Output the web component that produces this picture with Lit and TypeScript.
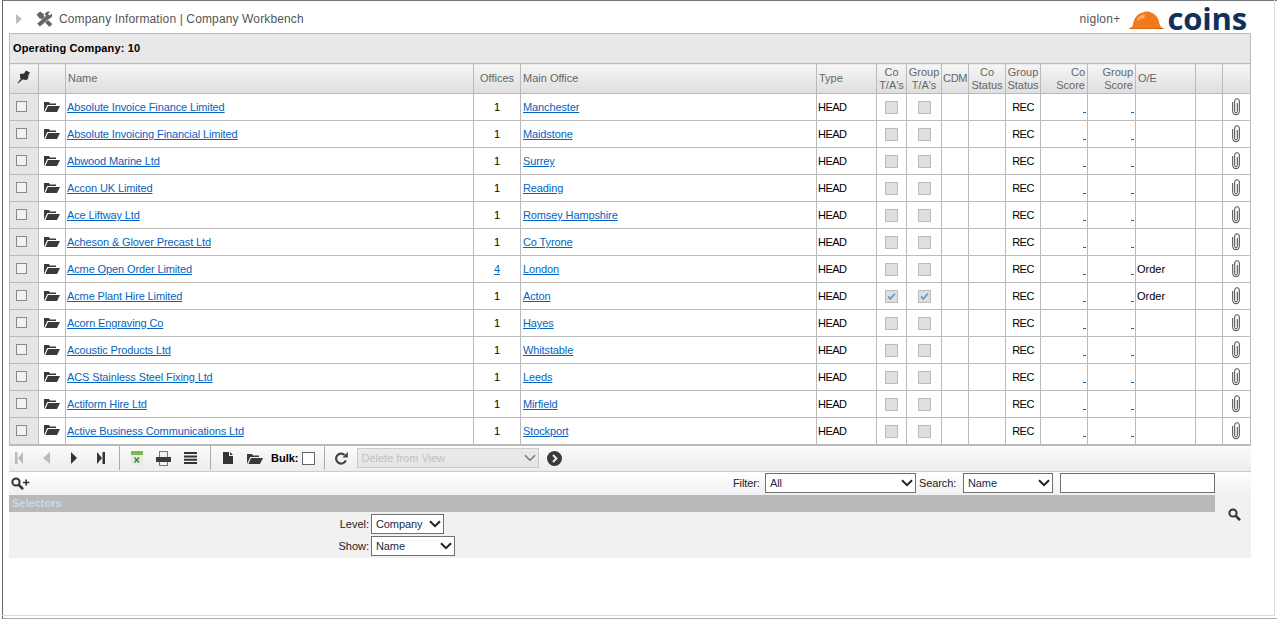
import { LitElement, html, css, svg } from "lit";
import { customElement } from "lit/decorators.js";

type Row = { name: string; offices: number; office: string; ticked?: boolean; oe?: string };

const rows: Row[] = [
  { name: "Absolute Invoice Finance Limited", offices: 1, office: "Manchester" },
  { name: "Absolute Invoicing Financial Limited", offices: 1, office: "Maidstone" },
  { name: "Abwood Marine Ltd", offices: 1, office: "Surrey" },
  { name: "Accon UK Limited", offices: 1, office: "Reading" },
  { name: "Ace Liftway Ltd", offices: 1, office: "Romsey Hampshire" },
  { name: "Acheson & Glover Precast Ltd", offices: 1, office: "Co Tyrone" },
  { name: "Acme Open Order Limited", offices: 4, office: "London", oe: "Order" },
  { name: "Acme Plant Hire Limited", offices: 1, office: "Acton", ticked: true, oe: "Order" },
  { name: "Acorn Engraving Co", offices: 1, office: "Hayes" },
  { name: "Acoustic Products Ltd", offices: 1, office: "Whitstable" },
  { name: "ACS Stainless Steel Fixing Ltd", offices: 1, office: "Leeds" },
  { name: "Actiform Hire Ltd", offices: 1, office: "Mirfield" },
  { name: "Active Business Communications Ltd", offices: 1, office: "Stockport" },
];

const colWidths = [29, 27, 408, 47, 296, 60, 30, 35, 27, 37, 35, 47, 48, 60, 27, 28];

const icon = (w: number, h: number, body: unknown) =>
  html`<svg width=${w} height=${h} viewBox="0 0 ${w} ${h}">${body}</svg>`;

const folderIcon = icon(
  16,
  11,
  svg`<path fill="#3a3a3a" d="M0 11V1h5l1 1.500h6V4H3.200L0 11Z"/><path fill="#3a3a3a" d="M1.400 11 4 5h12l-3 6H1.400Z"/>`
);

const clipIcon = icon(
  8,
  18,
  svg`<path fill="none" stroke="#444" stroke-width="1" d="M5.300 5v8.600a1.300 1.300 0 0 1-2.600 0V3a2.300 2.300 0 0 1 4.600 0v10.500a3.300 3.300 0 0 1-6.600 0V4"/>`
);

const pinIcon = icon(
  14,
  14,
  svg`<path fill="#333" d="M9 .5 13 2.500 11.500 5 11 9 9 10 5.500 9.500 1 13.500.5 13 4 8.500 3 8 3 4 7 3.500Z"/>`
);

const toolsIcon = icon(
  17,
  16,
  svg`<path stroke="#666" stroke-width="3.800" d="M4.500 4.500 15 14.500"/><path fill="#666" d="M.5 3.500 4 .5 8.500 3.500 4 8Z"/><path stroke="#ddd" stroke-width="4.800" d="M12 6 3 14"/><path stroke="#666" stroke-width="3.800" d="M12 6 2.500 14"/><path fill="#666" d="M9 2.500C10 .5 12.500 0 14 .8L12 3l1.500 1.500 2.300-2c.8 2 0 4-1.800 5-1.500.5-3 0-4-1.500Z"/>`
);

const magnifier = (plus: boolean) =>
  icon(
    plus ? 19 : 13,
    13,
    svg`<circle cx="5" cy="5" r="3.600" fill="none" stroke="#333" stroke-width="2"/><path stroke="#333" stroke-width="2.600" d="m7.800 7.800 4.200 4.400"/>${
      plus ? svg`<path stroke="#333" stroke-width="1.600" d="M12 5.500h6.400M15.200 2.500v6"/>` : ""
    }`
  );

const chevron = icon(12, 8, svg`<path fill="none" stroke="#1c2230" stroke-width="2" d="m1 1.200 5 5 5-5"/>`);
const greyChevron = icon(12, 8, svg`<path fill="none" stroke="#777" stroke-width="1.500" d="m1 1.200 5 5 5-5"/>`);

@customElement("app-root")
export class AppRoot extends LitElement {
  static styles = css`
    :host {
      display: block;
      font-family: "Liberation Sans", Arial, sans-serif;
      font-size: 11px;
      color: #000;
    }
    .frame {
      box-sizing: border-box;
      height: 619px;
      border-top: 1px solid #777;
      border-left: 1px solid #666;
      margin-left: 2px;
      padding: 0 26px 0 6px;
      position: relative;
    }
    .outer-edge {
      position: absolute;
      left: -1px;
      right: 2px;
      top: -1px;
      bottom: 3px;
      border-right: 1px solid #ddd;
      border-bottom: 1px solid #ddd;
      pointer-events: none;
    }
    .outer-edge-2 {
      position: absolute;
      left: 0;
      right: 0;
      bottom: 0;
      border-bottom: 1px solid #aaa;
    }
    .head {
      box-sizing: border-box;
      height: 32px;
      padding-top: 4px;
      display: flex;
      align-items: center;
      color: #555;
    }
    .arrow {
      width: 0;
      height: 0;
      margin-left: 7px;
      border-left: 6px solid #bdbdbd;
      border-top: 5.5px solid transparent;
      border-bottom: 5.5px solid transparent;
    }
    .tools {
      margin: 0 6px 0 14px;
      display: flex;
    }
    .title {
      font-size: 12px;
      letter-spacing: 0.13px;
      flex: 1;
    }
    .user {
      font-size: 12px;
      letter-spacing: 0.3px;
      margin-right: 8px;
    }
    .logo {
      display: flex;
      align-items: center;
      gap: 4px;
      margin: 2px 4px 0 0;
    }
    .logo-text {
      font-family: "Open Sans", sans-serif;
      font-weight: 700;
      font-size: 31px;
      line-height: 31px;
      margin-top: -4px;
      color: #12305c;
      letter-spacing: -0.2px;
    }
    .company {
      box-sizing: border-box;
      height: 30px;
      display: flex;
      align-items: center;
      padding: 0 0 2px 3px;
      font-weight: 700;
      letter-spacing: 0.15px;
      background: #e8e8e8;
      border: 1px solid #bbb;
      border-bottom: 0;
    }
    table {
      border-collapse: collapse;
      table-layout: fixed;
      width: 1241px;
      border-bottom: 2px solid #bbb;
    }
    th,
    td {
      border: 1px solid #bbb;
      padding: 0 1px;
      overflow: hidden;
      white-space: nowrap;
    }
    th {
      height: 30px;
      box-sizing: border-box;
      padding: 0 1px 1px;
      font-weight: 400;
      color: #666;
      line-height: 13px;
      background: linear-gradient(#f6f6f6, #dedede);
      text-align: center;
      white-space: normal;
    }
    th.two {
      padding-top: 1px;
      padding-bottom: 0;
    }
    th.left {
      text-align: left;
      padding-left: 2px;
    }
    th.right {
      text-align: right;
      padding-right: 2px;
    }
    th.tight {
      letter-spacing: -0.3px;
    }
    td {
      height: 27px;
      box-sizing: border-box;
    }
    td.c {
      text-align: center;
    }
    td.r {
      text-align: right;
    }
    td.sel {
      background: #e6e6e6;
      padding-right: 6px;
    }
    td.bare {
      padding: 0;
    }
    td.office {
      padding-left: 2px;
    }
    .code {
      letter-spacing: -0.5px;
    }
    .icon-cell {
      display: flex;
      align-items: center;
      justify-content: center;
    }
    .clip {
      padding-right: 2px;
    }
    .folder {
      padding-bottom: 2px;
    }
    a {
      color: #0563c1;
      text-decoration: underline;
      letter-spacing: -0.12px;
    }
    .box {
      display: inline-block;
      box-sizing: border-box;
      width: 11px;
      height: 11px;
      border: 1px solid #8a8a8a;
      background: #f2f2f2;
      vertical-align: middle;
      margin-bottom: 2px;
    }
    .box.off {
      width: 13px;
      height: 13px;
      border-color: #bbb;
      background: #dfdfdf;
      position: relative;
      margin-bottom: 0;
    }
    .box.off svg {
      position: absolute;
      left: 1px;
      top: 1px;
    }
    .toolbar {
      box-sizing: border-box;
      height: 26px;
      display: flex;
      align-items: center;
      background: linear-gradient(#fbfbfb, #ececec);
      border-bottom: 1px solid #ccc;
    }
    .tool {
      width: 27px;
      display: flex;
      justify-content: center;
      align-items: center;
      height: 100%;
    }
    .tool.first {
      width: 20px;
      margin-right: 4px;
    }
    .sep {
      width: 1px;
      height: 24px;
      background: #aaa;
      margin: 0 3px 0 6px;
    }
    .sep.near {
      margin-left: 5px;
    }
    .bulk {
      font-weight: 700;
      margin: 0 3px 0 3px;
    }
    .bulk-box {
      width: 13px;
      height: 13px;
      box-sizing: border-box;
      border: 1px solid #666;
      background: #fff;
      margin-right: 3px;
    }
    .lower {
      display: grid;
      grid-template-columns: 1206px 35px;
      height: 86px;
      background: linear-gradient(#fff, #f1f1f1 22px);
    }
    .filters {
      height: 23px;
      display: flex;
      align-items: center;
      color: #222;
    }
    .filters .lens {
      margin: 0 auto 0 2px;
      display: flex;
    }
    .drop {
      position: relative;
      display: block;
    }
    .drop select {
      appearance: none;
      box-sizing: border-box;
      display: block;
      height: 20px;
      width: 100%;
      padding: 0 4px;
      font: inherit;
      letter-spacing: -0.1px;
      color: #1a2a50;
      background: #fff;
      border: 1px solid #707070;
      border-radius: 0;
    }
    .drop svg {
      position: absolute;
      right: 3px;
      top: 6px;
      pointer-events: none;
    }
    .f-label {
      width: 32px;
      letter-spacing: -0.1px;
    }
    .s-label {
      width: 44px;
      letter-spacing: -0.1px;
    }
    .f-drop {
      width: 151px;
      margin-right: 3px;
    }
    .s-drop {
      width: 90px;
      margin-right: 7px;
    }
    .f-input {
      box-sizing: border-box;
      width: 155px;
      height: 20px;
      border: 1px solid #707070;
      background: #fff;
    }
    .bar {
      height: 17px;
      line-height: 17px;
      padding-left: 3px;
      background: #b9b9b9;
      color: #c5dce8;
      font-weight: 700;
    }
    .form {
      display: grid;
      grid-template-columns: 360px max-content;
      gap: 2px;
      padding-top: 2px;
      align-items: center;
    }
    .form label {
      text-align: right;
      color: #222;
    }
    .lvl {
      width: 73px;
    }
    .shw {
      width: 84px;
    }
    .go {
      display: flex;
      align-items: center;
      justify-content: center;
      padding-left: 3px;
    }
    .disabled {
      width: 182px;
      margin-left: 2px;
      margin-right: 8px;
    }
    .disabled select {
      background: #e3e3e3;
      border-color: #bbb;
      color: #aaa;
      letter-spacing: 0;
    }
  `;

  private renderHeader() {
    return html`<tr>
      <th>${pinIcon}</th>
      <th></th>
      <th class="left">Name</th>
      <th>Offices</th>
      <th class="left">Main Office</th>
      <th class="left">Type</th>
      <th class="two">Co T/A's</th>
      <th class="two">Group T/A's</th>
      <th class="tight">CDM</th>
      <th class="two">Co Status</th>
      <th class="two">Group Status</th>
      <th class="right two">Co Score</th>
      <th class="right two">Group Score</th>
      <th class="left">O/E</th>
      <th></th>
      <th></th>
    </tr>`;
  }

  private renderTick(ticked?: boolean) {
    return html`<span class="box off"
      >${ticked
        ? html`<svg width="9" height="9" viewBox="0 0 9 9">
            <path fill="none" stroke="#6a9bd0" stroke-width="1.800" d="m1 4.500 2.400 2.400L8 1.500" />
          </svg>`
        : ""}</span
    >`;
  }

  private renderRow(r: Row) {
    return html`<tr>
      <td class="sel c"><span class="box"></span></td>
      <td class="bare"><div class="icon-cell folder">${folderIcon}</div></td>
      <td><a href="#">${r.name}</a></td>
      <td class="c">${r.offices > 1 ? html`<a href="#">${r.offices}</a>` : r.offices}</td>
      <td class="office"><a href="#">${r.office}</a></td>
      <td><span class="code">HEAD</span></td>
      <td class="c">${this.renderTick(r.ticked)}</td>
      <td class="c">${this.renderTick(r.ticked)}</td>
      <td></td>
      <td></td>
      <td class="c"><span class="code">REC</span></td>
      <td class="r"><a href="#">&nbsp;</a></td>
      <td class="r"><a href="#">&nbsp;</a></td>
      <td>${r.oe ?? ""}</td>
      <td></td>
      <td class="bare"><div class="icon-cell clip">${clipIcon}</div></td>
    </tr>`;
  }

  private renderToolbar() {
    return html`<div class="toolbar">
      <span class="tool first">${icon(8, 12, svg`<path fill="#bbb" d="M0 0h2.500v12H0zM8 0v12L3 6z"/>`)}</span>
      <span class="tool">${icon(7, 12, svg`<path fill="#bbb" d="M7 0v12L0 6z"/>`)}</span>
      <span class="tool">${icon(6, 12, svg`<path fill="#333" d="M0 0v12l6-6z"/>`)}</span>
      <span class="tool">${icon(8, 12, svg`<path fill="#333" d="M5.500 0H8v12H5.500zM0 0v12l5-6z"/>`)}</span>
      <span class="sep near"></span>
      <span class="tool">${icon(
        12,
        14,
        svg`<path fill="#e6eadf" d="M0 0h12v14H0z"/><path fill="#7db84d" d="M0 0h12v4H0z"/><path stroke="#2f8a3a" stroke-width="1.500" d="m3.500 6.500 4.500 5M8 6.500l-4.500 5"/>`
      )}</span>
      <span class="tool">${icon(
        15,
        15,
        svg`<path fill="#777" d="M3 0h9v6H3zM3 10h9v5H3z"/><path fill="#f2f2f2" d="M4 1h7v5H4zM4 11h7v3H4z"/><path fill="#3a3a3a" d="M0 6h15v5H0z"/>`
      )}</span>
      <span class="tool">${icon(
        13,
        12,
        svg`<path fill="#333" d="M0 0h13v2H0zM0 3.400h13v2H0zM0 6.800h13v2H0zM0 10h13v2H0z"/>`
      )}</span>
      <span class="sep"></span>
      <span class="tool">${icon(10, 12, svg`<path fill="#333" d="M0 0h6v4h4v8H0zM7 0l3 3H7z"/>`)}</span>
      <span class="tool">${folderIcon}</span>
      <span class="bulk">Bulk:</span>
      <span class="bulk-box"></span>
      <span class="sep"></span>
      <span class="tool">${icon(
        13,
        13,
        svg`<path fill="none" stroke="#444" stroke-width="2.200" d="M10.800 8.400A5 5 0 1 1 9.600 3"/><path fill="#444" d="M7.400 5.600h5.400V0Z"/>`
      )}</span>
      <span class="drop disabled"
        ><select disabled><option>Delete from View</option></select>${greyChevron}</span
      >
      ${icon(
        15,
        15,
        svg`<circle cx="7.500" cy="7.500" r="7.500" fill="#3a3a3a"/><path fill="none" stroke="#eee" stroke-width="2" d="m6 4 3.400 3.500L6 11"/>`
      )}
    </div>`;
  }

  private renderLower() {
    return html`<div class="lower">
      <div>
        <div class="filters">
          <span class="lens">${magnifier(true)}</span>
          <span class="f-label">Filter:</span>
          <span class="drop f-drop"><select><option>All</option></select>${chevron}</span>
          <span class="s-label">Search:</span>
          <span class="drop s-drop"><select><option>Name</option></select>${chevron}</span>
          <input class="f-input" />
        </div>
        <div class="bar">Selectors</div>
        <div class="form">
          <label>Level:</label>
          <span class="drop lvl"><select><option>Company</option></select>${chevron}</span>
          <label>Show:</label>
          <span class="drop shw"><select><option>Name</option></select>${chevron}</span>
        </div>
      </div>
      <div class="go">${magnifier(false)}</div>
    </div>`;
  }

  render() {
    return html`<div class="frame">
      <div class="head">
        <span class="arrow"></span>
        <span class="tools">${toolsIcon}</span>
        <span class="title">Company Information | Company Workbench</span>
        <span class="user">niglon+</span>
        <span class="logo">
          ${icon(
            35,
            18,
            svg`<path fill="#f07a1e" d="M0 18 1 17C3 16 4 15 4 13 5 6 10 2 14 1.500 15 0 21 0 22 1.500 27 3 30 8 30.500 13 31 15 33 17 35 18Z"/><path fill="#f9ab72" d="M8 8C10 5 13 3.500 16 3.500L15.500 7C13 7 10.500 8 8.500 10.500Z"/><path fill="#d9660f" d="M1 17H34L35 18H0Z"/>`
          )}
          <span class="logo-text">coins</span>
        </span>
      </div>
      <div class="company">Operating Company: 10</div>
      <table>
        <colgroup>
          ${colWidths.map((w) => html`<col style="width:${w}px" />`)}
        </colgroup>
        <thead>
          ${this.renderHeader()}
        </thead>
        <tbody>
          ${rows.map((r) => this.renderRow(r))}
        </tbody>
      </table>
      ${this.renderToolbar()} ${this.renderLower()}
      <div class="outer-edge"></div>
      <div class="outer-edge-2"></div>
    </div>`;
  }
}
